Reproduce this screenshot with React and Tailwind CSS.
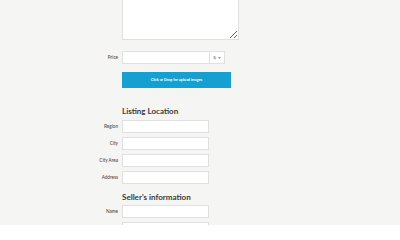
import React from "react";

const Label = ({ children }) => (
  <div className="w-[118px] text-right text-[4.6px] font-semibold text-[#555]">
    {children}
  </div>
);

const Field = ({ label, className = "" }) => (
  <div className={`flex items-center gap-[4px] ${className}`}>
    <Label>{label}</Label>
    <input
      type="text"
      className="h-[13px] w-[87px] border border-[#e0e0e0] bg-white outline-none"
    />
  </div>
);

const Heading = ({ children, className = "" }) => (
  <h2
    className={`ml-[122px] h-[12px] text-[8px] leading-[12px] font-bold text-[#3a3a3a] ${className}`}
  >
    {children}
  </h2>
);

export default function App() {
  return (
    <div className="h-[225px] w-[400px] overflow-hidden bg-[#f5f5f3] font-['Lato',sans-serif]">
      <div className="flex w-[400px] flex-col">
        {/* Description */}
        <div className="ml-[122px] -mt-[21px]">
          <textarea className="block h-[61px] w-[117px] border border-[#e0e0e0] bg-white outline-none" />
        </div>

        {/* Price */}
        <div className="mt-[11px] flex items-center gap-[4px]">
          <Label>Price</Label>
          <div className="flex h-[13px] border border-[#e0e0e0] bg-white">
            <input type="text" className="h-full w-[86px] outline-none" />
            <div className="flex w-[15px] items-center justify-center gap-[2px] border-l border-[#e0e0e0] text-[4.6px] text-[#666]">
              <span>$</span>
              <svg width="3" height="2" viewBox="0 0 6 4">
                <path d="M0 0 L6 0 L3 4 Z" fill="#999" />
              </svg>
            </div>
          </div>
        </div>

        {/* Upload */}
        <button className="mt-[8px] ml-[122px] flex h-[16px] w-[109px] items-center justify-center bg-[#169fd2] text-[3.7px] font-bold text-white">
          Click or Drop for upload images
        </button>

        {/* Listing Location */}
        <Heading className="mt-[17px] mb-[3px]">Listing Location</Heading>
        <div className="flex flex-col gap-[4px]">
          <Field label="Region" />
          <Field label="City" />
          <Field label="City Area" />
          <Field label="Address" />
        </div>

        {/* Seller */}
        <Heading className="mt-[7px] mb-[2px]">Seller's information</Heading>
        <div className="flex flex-col gap-[4px]">
          <Field label="Name" />
          <Field label="" />
        </div>
      </div>
    </div>
  );
}
